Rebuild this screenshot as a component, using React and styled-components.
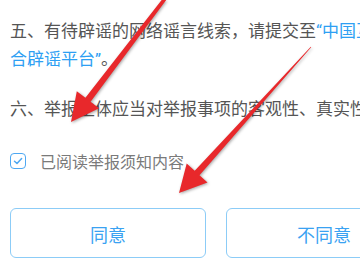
import React from "react";
import styled, { createGlobalStyle } from "styled-components";

const Global = createGlobalStyle`
  html, body { margin: 0; padding: 0; background: #ffffff; overflow: hidden; }
  body { width: 360px; height: 270px; font-family: Roboto, "Noto Sans CJK SC", sans-serif; }
`;

const Page = styled.div`
  position: relative;
  width: 360px;
  height: 270px;
  overflow: hidden;
`;

const Content = styled.div`
  width: 420px;
  padding: 17px 0 0 10px;
  display: flex;
  flex-direction: column;
`;

const Para = styled.p`
  margin: 0 0 ${(p) => p.$after || 0}px 0;
  font-size: 17px;
  line-height: 28px;
  color: #555555;
  font-family: Roboto, "Noto Sans CJK SC", sans-serif;
`;

const Link = styled.span`
  color: #2e9ff3;
`;

const CheckRow = styled.label`
  display: flex;
  align-items: center;
  gap: 14px;
  height: 24px;
  margin-top: 26px;
`;

const Box = styled.span`
  box-sizing: border-box;
  width: 16px;
  height: 16px;
  border: 1.5px solid #4ea8f2;
  border-radius: 4px;
  display: flex;
  align-items: center;
  justify-content: center;
`;

const CheckText = styled.span`
  font-size: 16px;
  color: #7a7a7a;
  font-family: "Noto Sans CJK SC", sans-serif;
`;

const Buttons = styled.div`
  display: flex;
  gap: 20px;
  margin-top: 35px;
`;

const Button = styled.button`
  box-sizing: border-box;
  width: 196px;
  height: 50px;
  background: #ffffff;
  border: 1.5px solid #8cccf7;
  border-radius: 6px;
  color: #3aa2f2;
  font-size: 18px;
  font-family: "Noto Sans CJK SC", sans-serif;
  padding: 0;
  padding-top: 2px;
`;

const Overlay = styled.svg`
  position: absolute;
  left: 0;
  top: 0;
  width: 360px;
  height: 270px;
  pointer-events: none;
  filter: drop-shadow(1px 1px 1.5px rgba(0, 0, 0, 0.35));
`;

function arrow(x0, y0, x1, y1, w0, w1, headLen, headHalf) {
  const dx = x1 - x0;
  const dy = y1 - y0;
  const len = Math.hypot(dx, dy);
  const ux = dx / len;
  const uy = dy / len;
  const px = -uy;
  const py = ux;
  const bx = x1 - ux * headLen;
  const by = y1 - uy * headLen;
  const pts = [
    [x0 + (px * w0) / 2, y0 + (py * w0) / 2],
    [bx + (px * w1) / 2, by + (py * w1) / 2],
    [bx + px * headHalf, by + py * headHalf],
    [x1, y1],
    [bx - px * headHalf, by - py * headHalf],
    [bx - (px * w1) / 2, by - (py * w1) / 2],
    [x0 - (px * w0) / 2, y0 - (py * w0) / 2],
  ];
  return pts.map((p) => p.map((v) => v.toFixed(1)).join(",")).join(" ");
}

export default function App() {
  return (
    <Page>
      <Global />
      <Content>
        <Para $after={22}>
          五、有待辟谣的网络谣言线索，请提交至
          <Link>“中国互联网联合辟谣平台”</Link>。
        </Para>
        <Para>六、举报主体应当对举报事项的客观性、真实性负责。</Para>
        <CheckRow>
          <Box>
            <svg width="10" height="8" viewBox="0 0 10 8">
              <path d="M1.5 4.2 L4 6.5 L8.6 1.6" fill="none" stroke="#4ea8f2" strokeWidth="1.5" strokeLinecap="round" strokeLinejoin="round" />
            </svg>
          </Box>
          <CheckText>已阅读举报须知内容</CheckText>
        </CheckRow>
        <Buttons>
          <Button>同意</Button>
          <Button>不同意</Button>
        </Buttons>
      </Content>
      <Overlay viewBox="0 0 360 270">
        <polygon points={arrow(167, -4, 71, 122, 3.5, 6.5, 28, 14)} fill="#e8282b" />
        <polygon points={arrow(311, 47, 179, 193, 0.6, 6.5, 27, 14)} fill="#e8282b" />
      </Overlay>
    </Page>
  );
}
